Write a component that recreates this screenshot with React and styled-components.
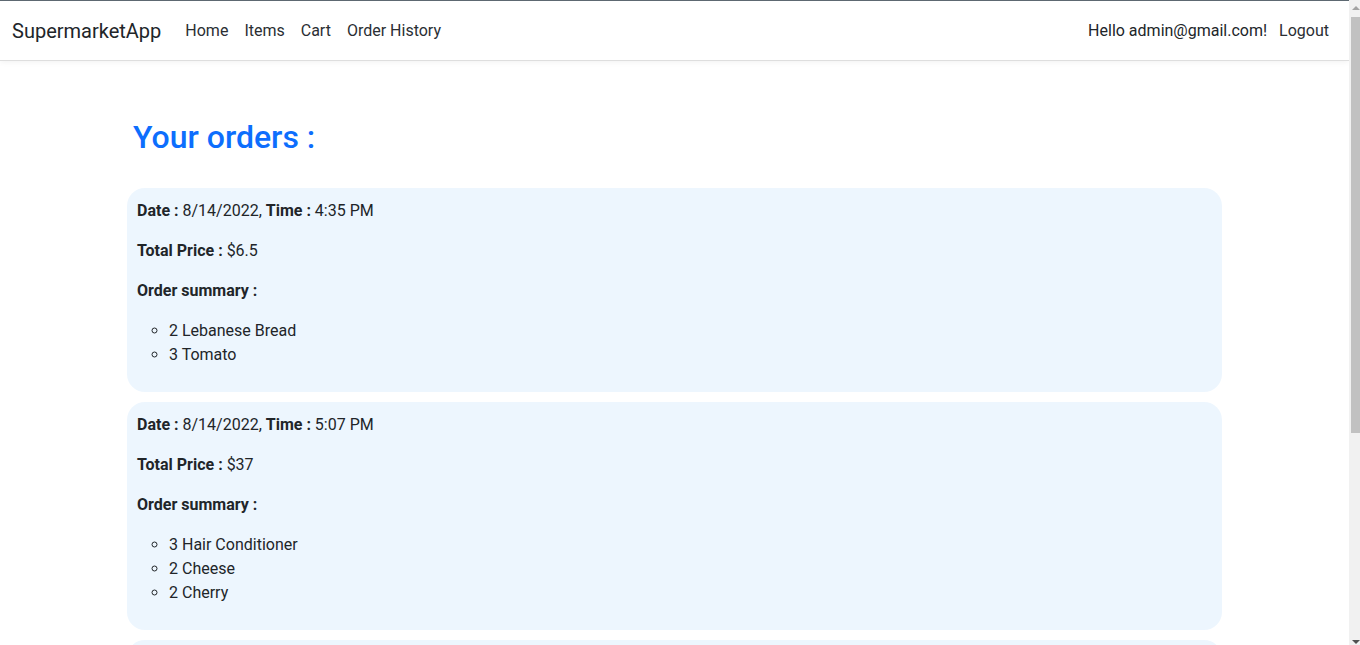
import React from "react";
import styled, { createGlobalStyle } from "styled-components";

const orders = [
  {
    date: "8/14/2022",
    time: "4:35 PM",
    total: "$6.5",
    items: ["2 Lebanese Bread", "3 Tomato"],
  },
  {
    date: "8/14/2022",
    time: "5:07 PM",
    total: "$37",
    items: ["3 Hair Conditioner", "2 Cheese", "2 Cherry"],
  },
  {
    date: "8/15/2022",
    time: "10:12 AM",
    total: "$12",
    items: ["1 Milk", "4 Apple"],
  },
];

export default function App() {
  return (
    <Viewport>
      <GlobalStyle />
      <Page>
        <Navbar>
          <Brand>SupermarketApp</Brand>
          <NavLinks>
            <NavLink>Home</NavLink>
            <NavLink>Items</NavLink>
            <NavLink>Cart</NavLink>
            <NavLink>Order History</NavLink>
          </NavLinks>
          <UserArea>
            <Greeting>Hello admin@gmail.com!</Greeting>
            <NavLink>Logout</NavLink>
          </UserArea>
        </Navbar>
        <Main>
          <Heading>Your orders :</Heading>
          {orders.map((order, i) => (
            <OrderCard key={i}>
              <Line>
                <b>Date :</b> {order.date}, <b>Time :</b> {order.time}
              </Line>
              <Line>
                <b>Total Price :</b> {order.total}
              </Line>
              <Line>
                <b>Order summary :</b>
              </Line>
              <ItemList>
                {order.items.map(item => (
                  <li key={item}>{item}</li>
                ))}
              </ItemList>
            </OrderCard>
          ))}
        </Main>
      </Page>
      <Scrollbar>
        <Arrow $up />
        <Thumb />
        <Track />
        <Arrow />
      </Scrollbar>
    </Viewport>
  );
}

const GlobalStyle = createGlobalStyle`
  body {
    margin: 0;
    font-family: Roboto, "Liberation Sans", sans-serif;
    font-size: 16px;
    line-height: 1.5;
    color: #212529;
    background: #fff;
  }
  b {
    font-weight: 700;
  }
`;

const Viewport = styled.div`
  display: flex;
  height: 100vh;
  overflow: hidden;
`;

const Page = styled.div`
  flex: 1;
  min-width: 0;
  overflow: hidden;
`;

const Scrollbar = styled.div`
  width: 11px;
  display: flex;
  flex-direction: column;
  align-items: flex-end;
  background: #f1f1f1;
`;

const Arrow = styled.div`
  height: 17px;
  width: 9px;
  display: flex;
  align-items: center;
  justify-content: center;
  &::before {
    content: "";
    border-left: 4px solid transparent;
    border-right: 4px solid transparent;
    ${p =>
      p.$up
        ? "border-bottom: 4px solid #a3a3a3; margin-top: -1px;"
        : "border-top: 4px solid #505050; margin-top: 10px;"}
  }
`;

const Thumb = styled.div`
  width: 9px;
  height: 416px;
  background: #c1c1c1;
`;

const Track = styled.div`
  flex: 1;
`;

const Navbar = styled.nav`
  display: flex;
  align-items: center;
  height: 58px;
  padding: 1px 12px 0;
  border-top: 1px solid #5d6871;
  background: #fff;
  box-shadow: 0 1px 0 #dedede, 0 2px 6px rgba(0, 0, 0, 0.06);
`;

const Brand = styled.div`
  font-size: 20px;
  line-height: 30px;
  margin-right: 16px;
  color: #212529;
`;

const NavLinks = styled.div`
  display: flex;
  flex: 1;
`;

const NavLink = styled.div`
  padding: 8px;
  color: #2a2e33;
  cursor: pointer;
`;

const UserArea = styled.div`
  display: flex;
  align-items: center;
  gap: 2px;
`;

const Greeting = styled.div`
  color: #212529;
  margin-right: 2px;
`;

const Main = styled.main`
  max-width: 1095px;
  margin: 0 auto;
  padding-top: 58px;
`;

const Heading = styled.h2`
  margin: 0 0 32px 6px;
  font-size: 32px;
  font-weight: 500;
  line-height: 1.2;
  color: #0d6efd;
`;

const OrderCard = styled.section`
  padding: 11px 10px 9px;
  margin-bottom: 10px;
  border-radius: 18px;
  background: #edf6fe;
`;

const Line = styled.p`
  margin: 0 0 16px;
`;

const ItemList = styled.ul`
  margin: 0 0 16px;
  padding-left: 32px;
  list-style: circle;
`;
